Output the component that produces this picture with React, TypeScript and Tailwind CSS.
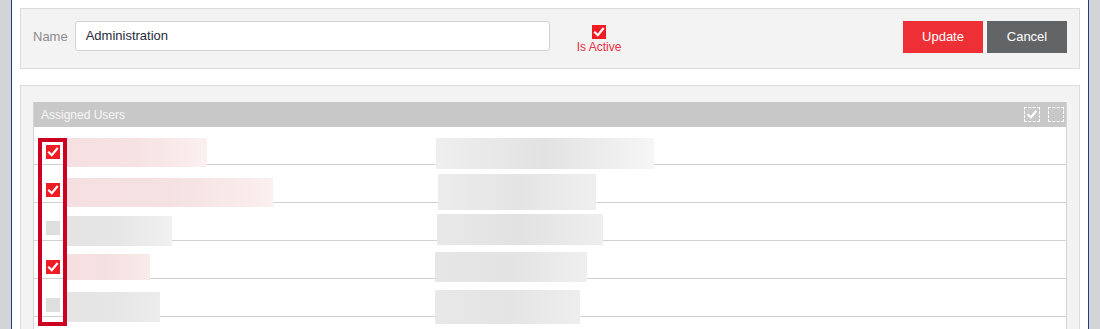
const rows = [
  {
    checked: true,
    box: "mt-[18px]",
    name: "mt-[11px] h-[29px] w-[140px] bg-linear-to-r from-[#f6dfe0] via-[#f7e2e3] to-[#fbf0f0]",
    info: "mt-[11px] ml-[1px] h-[31px] w-[218px] bg-linear-to-r from-[#efefef] via-[#e2e2e2] to-[#f6f6f6]",
  },
  {
    checked: true,
    box: "mt-[18px]",
    name: "mt-[13px] h-[29px] w-[206px] bg-linear-to-r from-[#f6dfe0] via-[#f5e1e2] to-[#fbefef]",
    info: "mt-[9px] ml-[3px] h-[36px] w-[158px] bg-linear-to-r from-[#ececec] via-[#e4e4e4] to-[#efefef]",
  },
  {
    checked: false,
    box: "mt-[18px]",
    name: "mt-[13px] h-[30px] w-[105px] bg-linear-to-r from-[#e4e4e4] via-[#e6e6e6] to-[#f1f1f1]",
    info: "mt-[11px] ml-[2px] h-[31px] w-[166px] bg-linear-to-r from-[#e8e8e8] via-[#e2e2e2] to-[#eeeeee]",
  },
  {
    checked: true,
    box: "mt-[19px]",
    name: "mt-[13px] h-[26px] w-[83px] bg-linear-to-r from-[#f6dfe0] via-[#f5e0e1] to-[#f9ebeb]",
    info: "mt-[11px] h-[30px] w-[152px] bg-linear-to-r from-[#e6e6e6] via-[#e3e3e3] to-[#efefef]",
  },
  {
    checked: false,
    box: "mt-[19px]",
    name: "mt-[13px] h-[30px] w-[93px] bg-linear-to-r from-[#e4e4e4] via-[#e6e6e6] to-[#ececec]",
    info: "mt-[11px] h-[34px] w-[145px] bg-linear-to-r from-[#e8e8e8] via-[#e4e4e4] to-[#eeeeee]",
  },
];

const Check = ({ className }: { className?: string }) => (
  <svg viewBox="0 0 14 14" className={className}>
    <path d="M3 7.5 L5.8 10.2 L11 3.8" fill="none" stroke="white" strokeWidth="2.2" strokeLinecap="square" />
  </svg>
);

const Checkbox = ({ checked, className = "" }: { checked: boolean; className?: string }) =>
  checked ? (
    <div className={`h-[14px] w-[14px] shrink-0 bg-[#f01c24] ${className}`}>
      <Check className="h-[14px] w-[14px]" />
    </div>
  ) : (
    <div className={`h-[14px] w-[14px] shrink-0 bg-[#dedede] ${className}`} />
  );

const App: React.FC = () => {
  return (
    <div className="flex h-[329px] overflow-hidden bg-[#d3d4d6] px-[11px] font-['Liberation_Sans',Arial,sans-serif]">
      <div className="flex-1 border-x border-[#23397a] bg-white px-2 pt-2">
        {/* Role form */}
        <div className="flex h-[61px] items-start border border-[#dcdcdc] bg-[#f3f3f3] px-3 pt-3">
          <span className="mt-[6px] text-[13px] text-[#8c8c8c]">Name</span>
          <div className="ml-[7px] flex h-[30px] w-[475px] items-center rounded-[3px] border border-[#d2d2d2] bg-white px-[10px] text-[13px] text-[#2a2a3a]">
            Administration
          </div>
          <div className="ml-[27px] mt-[4px] flex flex-col items-center">
            <Checkbox checked />
            <span className="mt-[1px] text-[12px] leading-[14px] text-[#ee2f45]">Is Active</span>
          </div>
          <div className="ml-auto flex gap-1">
            <button className="h-[32px] w-[80px] bg-[#ee2f35] text-[13px] text-white">Update</button>
            <button className="h-[32px] w-[80px] bg-[#636466] text-[13px] text-white">Cancel</button>
          </div>
        </div>

        {/* Assigned users */}
        <div className="mt-4 h-[300px] border border-[#dcdcdc] bg-[#f3f3f3] px-3 pt-4">
          <div className="h-full border-x border-[#d4d4d4] bg-white">
            <div className="flex h-[25px] items-center justify-between bg-[#c8c8c8] pl-[7px] pr-[2px]">
              <span className="text-[12px] text-[#f7f7f7]">Assigned Users</span>
              <div className="flex gap-[8px]">
                <div className="h-[15px] w-[16px] border border-dashed border-white">
                  <Check className="h-[13px] w-[14px]" />
                </div>
                <div className="h-[15px] w-[16px] border border-dashed border-white" />
              </div>
            </div>
            <div className="relative">
              {rows.map((r, i) => (
                <div key={i} className="flex h-[38px] items-start border-b border-[#d2d2d2] pl-[12px]">
                  <Checkbox checked={r.checked} className={r.box} />
                  <div className="ml-[7px] w-[368px] shrink-0">
                    <div className={r.name} />
                  </div>
                  <div className={r.info} />
                </div>
              ))}
              <div className="h-[38px] border-b border-[#d2d2d2]" />
              <div className="absolute left-[4px] top-[11px] h-[188px] w-[29px] border-[4px] border-[#cc0022]" />
            </div>
          </div>
        </div>
      </div>
    </div>
  );
};

export default App;
